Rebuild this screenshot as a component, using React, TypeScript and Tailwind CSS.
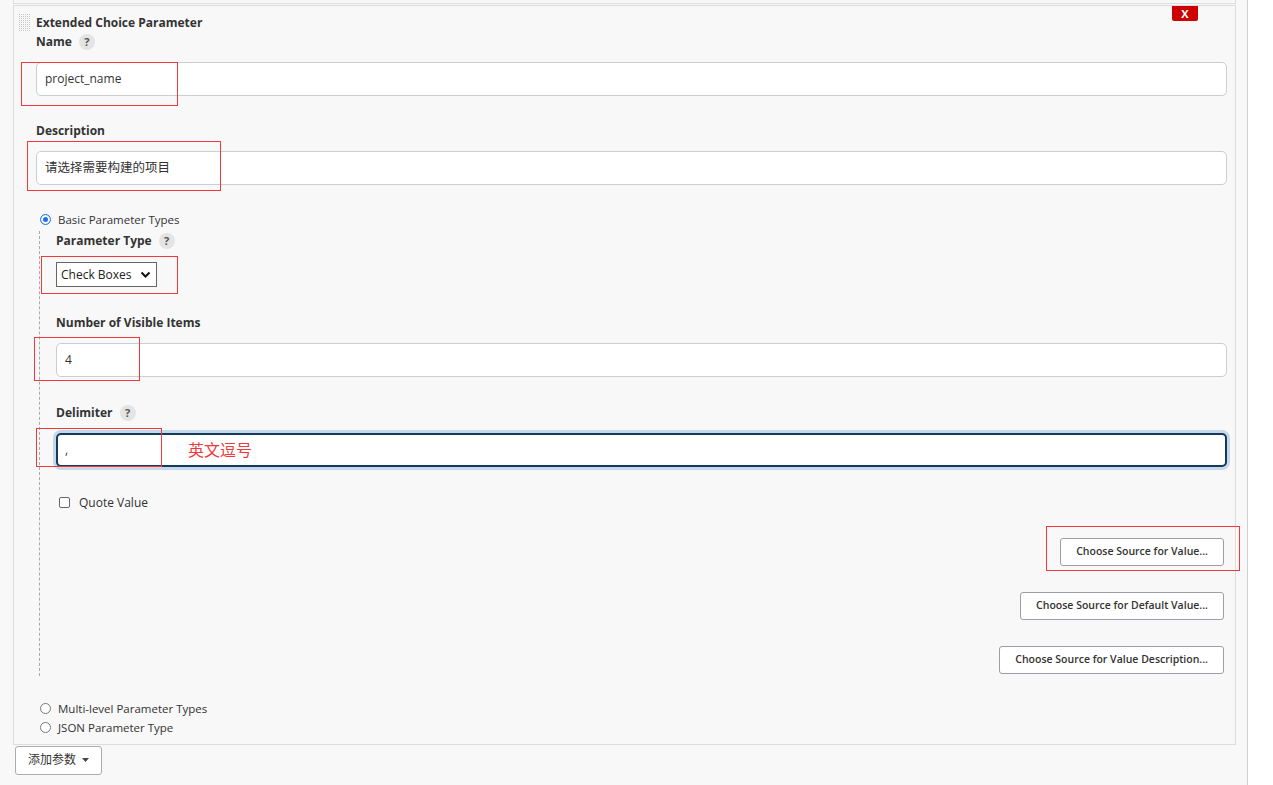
import React from 'react';

const font = { fontFamily: '"Open Sans", "Noto Sans CJK SC", sans-serif' };

const Help: React.FC = () => (
  <span className="ml-[7px] inline-flex h-[16px] w-[16px] items-center justify-center rounded-full bg-[#e4e4e4] text-[11px] font-bold leading-none text-[#555]">
    ?
  </span>
);

const Label: React.FC<{ text: string; help?: boolean; className?: string }> = ({ text, help, className = '' }) => (
  <div className={`flex h-[19px] items-center text-[12px] font-bold text-[#333] ${className}`}>
    {text}
    {help && <Help />}
  </div>
);

// red annotation rectangle drawn over a field
const Mark: React.FC<{ className: string }> = ({ className }) => (
  <div className={`pointer-events-none absolute border border-[#f03a3a] ${className}`} />
);

const TextBox: React.FC<{ value: string; focused?: boolean; size?: string }> = ({ value, focused, size = 'text-[12px]' }) =>
  focused ? (
    <div className="-m-[3px] rounded-[8px] bg-[#c4d8e9] p-[3px]">
      <div className={`flex h-[34px] items-center rounded-[5px] border-2 border-[#163a5c] bg-white px-[7px] text-[#333] ${size}`}>
        {value}
      </div>
    </div>
  ) : (
    <div className={`flex h-[34px] items-center rounded-[5px] border border-[#c8ced2] bg-white px-[8px] text-[#333] ${size}`}>
      {value}
    </div>
  );

const SourceButton: React.FC<{ text: string }> = ({ text }) => (
  <button className="h-[28px] rounded-[3px] border border-[#9aa0a6] bg-white px-[15px] text-[10.5px] font-semibold text-[#333]">
    {text}
  </button>
);

const Radio: React.FC<{ checked?: boolean; text: string }> = ({ checked, text }) => (
  <div className="flex h-[19px] items-center text-[11.5px] text-[#333]">
    <span
      className={`mr-[7px] ml-[4px] inline-block h-[11px] w-[11px] rounded-full border ${
        checked ? 'border-[#1a73e8] bg-white shadow-[inset_0_0_0_2px_#fff,inset_0_0_0_6px_#1a73e8]' : 'border-[#777] bg-white'
      }`}
    />
    {text}
  </div>
);

const DragHandle: React.FC = () => (
  <svg className="absolute left-[5px] top-[8px]" width="11" height="17" viewBox="0 0 11 17">
    <defs>
      <pattern id="dots" width="2" height="2" patternUnits="userSpaceOnUse">
        <rect width="1" height="1" fill="#c4c4c4" />
      </pattern>
    </defs>
    <rect width="11" height="17" fill="url(#dots)" />
  </svg>
);

export default function App() {
  return (
    <div className="flex min-h-[785px] bg-white" style={font}>
      <div className="w-[1248px] border-r border-[#cfcfcf] bg-[#f8f8f8] pl-[13px]">
        <div className="h-[4px] w-[1223px] border-x border-b border-[#dddddd]" />
        <div className="relative mt-[1px] w-[1223px] border border-[#dddddd] pb-[7px] pl-[22px] pr-[8px] pt-[7px]">
          <DragHandle />
          <button className="absolute right-[37px] top-0 flex h-[15px] w-[26px] items-center justify-center rounded-b-[2px] bg-[#cc0000] text-[11px] font-bold leading-none text-white">
            X
          </button>

          <Label text="Extended Choice Parameter" />
          <Label text="Name" help />
          <div className="relative mt-[11px]">
            <TextBox value="project_name" />
            <Mark className="-left-[15px] top-0 h-[44px] w-[157px]" />
          </div>

          <Label text="Description" className="mt-[25px]" />
          <div className="relative mt-[11px]">
            <TextBox value="请选择需要构建的项目" size="text-[12.5px]" />
            <Mark className="-left-[9px] -top-[10px] h-[50px] w-[194px]" />
          </div>

          <div className="mt-[25px]">
            <Radio checked text="Basic Parameter Types" />
          </div>

          <div className="ml-[3px] border-l border-dashed border-[#aaa] pb-[2px] pl-[16px]">
            <Label text="Parameter Type" help className="mt-[2px]" />
            <div className="relative mt-[12px] w-fit">
              <div className="flex h-[25px] w-[101px] items-center justify-between border border-[#666] bg-white pl-[4px] pr-[5px] text-[12px] text-[#222]">
                Check Boxes
                <svg width="11" height="8" viewBox="0 0 11 8">
                  <path d="M1.5 1.5 L5.5 5.5 L9.5 1.5" fill="none" stroke="#111" strokeWidth="2" />
                </svg>
              </div>
              <Mark className="-left-[15px] -top-[6px] h-[38px] w-[137px]" />
            </div>

            <Label text="Number of Visible Items" className="mt-[26px]" />
            <div className="relative mt-[11px]">
              <TextBox value="4" />
              <Mark className="-left-[22px] -top-[6px] h-[44px] w-[106px]" />
            </div>

            <Label text="Delimiter" help className="mt-[26px]" />
            <div className="relative mt-[11px]">
              <TextBox value="," focused />
              <Mark className="-left-[20px] -top-[2px] h-[39px] w-[126px]" />
              <span className="absolute left-[132px] top-[12px] text-[16px] leading-none text-[#f03a3a]">英文逗号</span>
            </div>

            <label className="mt-[26px] flex h-[19px] items-center pl-[3px] text-[12px] text-[#333]">
              <span className="mr-[9px] inline-block h-[11px] w-[11px] rounded-[2px] border border-[#666] bg-white" />
              Quote Value
            </label>

            <div className="mr-[3px] mt-[25px] flex flex-col items-end gap-[26px]">
              <div className="relative">
                <SourceButton text="Choose Source for Value..." />
                <Mark className="-left-[14px] -top-[11px] h-[45px] w-[194px]" />
              </div>
              <SourceButton text="Choose Source for Default Value..." />
              <SourceButton text="Choose Source for Value Description..." />
            </div>
          </div>

          <div className="mt-[23px]">
            <Radio text="Multi-level Parameter Types" />
            <Radio text="JSON Parameter Type" />
          </div>
        </div>

        <button className="ml-[2px] mt-[1px] flex h-[29px] w-[87px] items-center justify-center gap-[6px] rounded-[3px] border border-[#a8adb3] bg-white text-[12px] text-[#333]">
          添加参数
          <svg width="7" height="4" viewBox="0 0 7 4">
            <path d="M0 0 L7 0 L3.5 4 Z" fill="#444" />
          </svg>
        </button>
      </div>
    </div>
  );
}
